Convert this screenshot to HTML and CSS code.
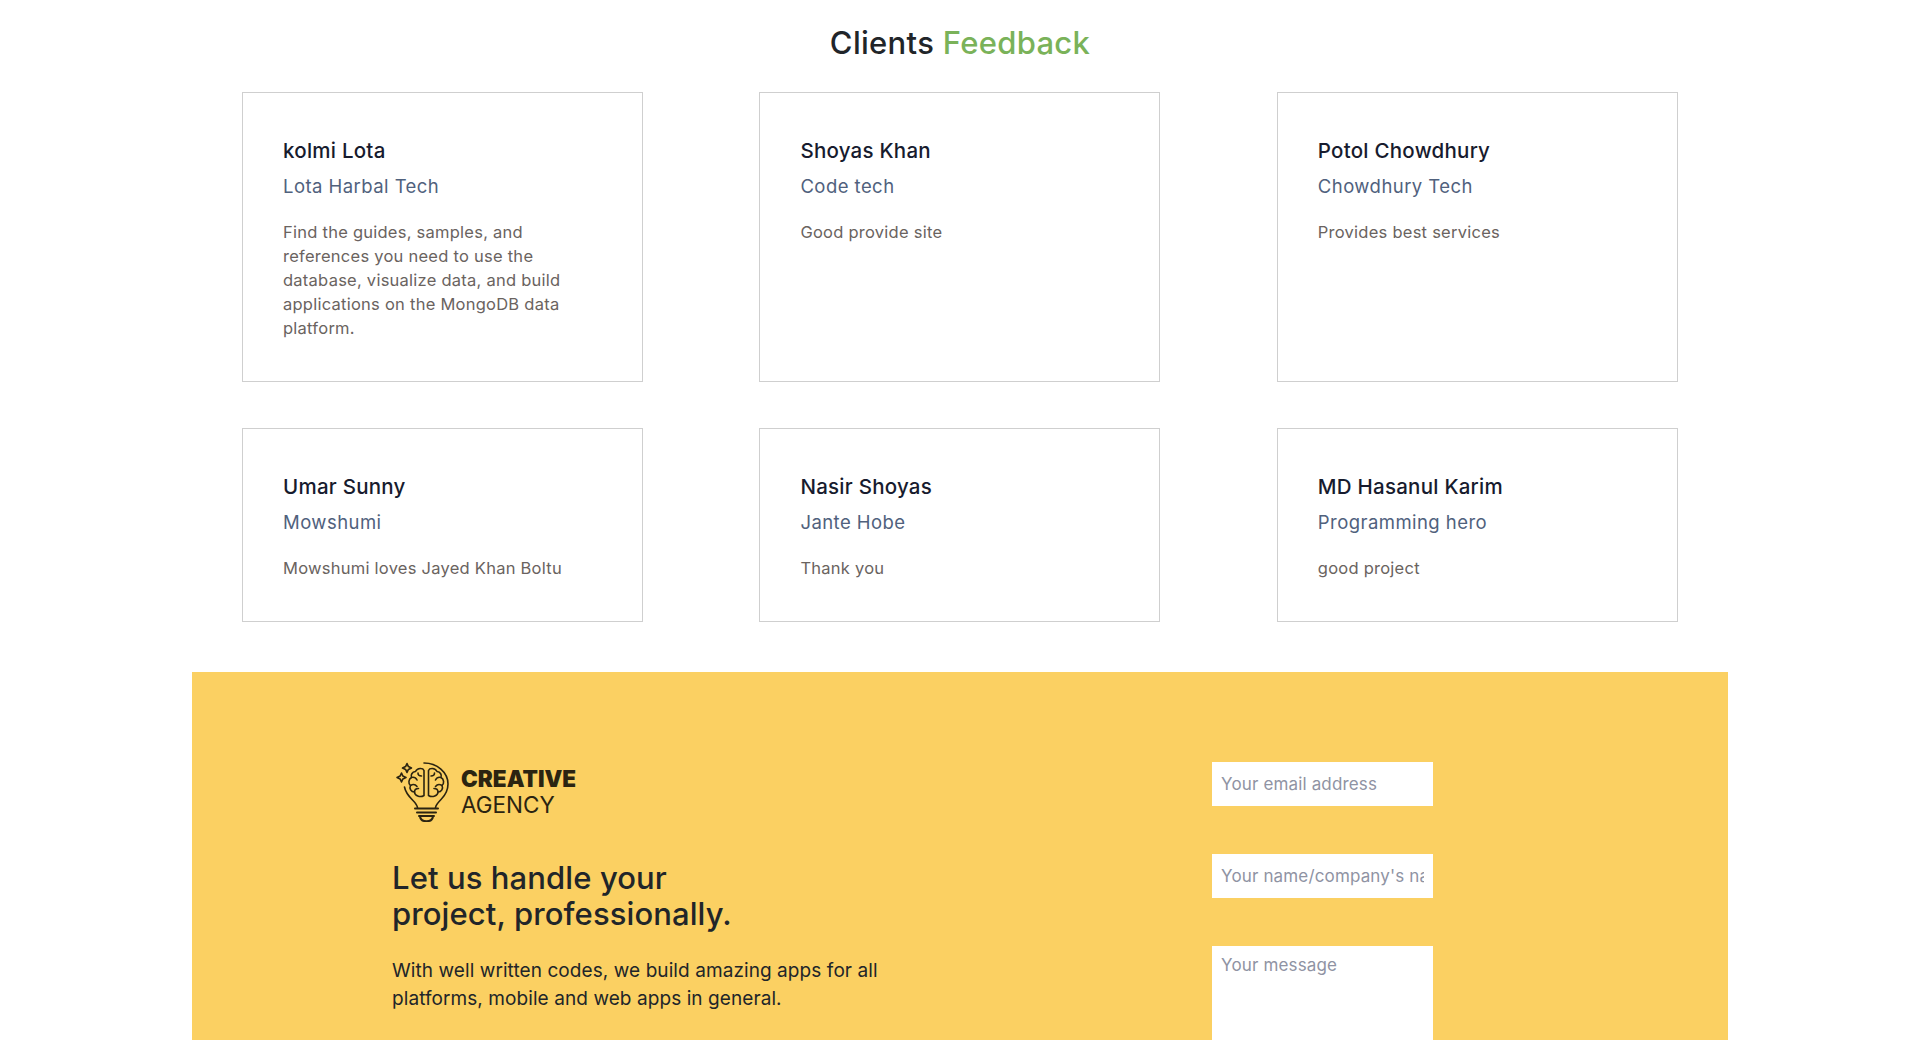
FILE: index.html
```html
<!DOCTYPE html>
<html lang="en">
<head>
<meta charset="utf-8">
<title>Creative Agency</title>
<link rel="stylesheet" href="styles.css">
</head>
<body>
<section class="feedback">
  <h2 class="title">Clients <span class="accent">Feedback</span></h2>
  <div class="cards">
    <article class="card"><h3 class="name">kolmi Lota</h3><h4 class="company">Lota Harbal Tech</h4><p class="text">Find the guides, samples, and references you need to use the database, visualize data, and build applications on the MongoDB data platform.</p></article>
    <article class="card"><h3 class="name">Shoyas Khan</h3><h4 class="company">Code tech</h4><p class="text">Good provide site</p></article>
    <article class="card"><h3 class="name">Potol Chowdhury</h3><h4 class="company">Chowdhury Tech</h4><p class="text">Provides best services</p></article>
    <article class="card"><h3 class="name">Umar Sunny</h3><h4 class="company">Mowshumi</h4><p class="text">Mowshumi loves Jayed Khan Boltu</p></article>
    <article class="card"><h3 class="name">Nasir Shoyas</h3><h4 class="company">Jante Hobe</h4><p class="text">Thank you</p></article>
    <article class="card"><h3 class="name">MD Hasanul Karim</h3><h4 class="company">Programming hero</h4><p class="text">good project</p></article>
  </div>
</section>
<footer class="contact">
  <div class="intro">
    <div class="logo">
      <svg class="bulb" viewBox="0 0 54 60" width="54" height="60" fill="none" stroke="#2b2411" stroke-width="1.600" stroke-linecap="round" stroke-linejoin="round">
        <path d="M28 1c13 0 24 9.500 24 21 0 7-3.500 12-7 15.500-3 3-5 5.500-5.500 8"/>
        <path d="M21.500 45.500c-.5-2.500-2.500-5-5-7.500C12.500 34 9.500 30.500 8.500 25"/>
        <path d="M28 8.500c-1-2.500-6.500-3-8.500 1-3.500.5-5 3.500-4 6-3 1.500-3.500 6-1 8-1.500 3 .5 6.500 4 6.500 0 3.500 5.500 6 9.500 3.500z"/>
        <path d="M32.500 8.500c1-2.500 6.500-3 8.500 1 3.500.5 5 3.500 4 6 3 1.500 3.500 6 1 8 1.500 3-.5 6.500-4 6.500 0 3.500-5.500 6-9.500 3.500z"/>
        <path d="M15.500 15.500c2-.5 4.500.5 5.500 2.500M14.500 23.500c2.500-1.500 5-1 6.500 1M18.500 30c0-2 1.500-3.500 4-3.500M22 11c0 2 1.500 3 3.500 3"/>
        <path d="M45 15.500c-2-.5-4.500.5-5.500 2.500M46 23.500c-2.500-1.500-5-1-6.500 1M42 30c0-2-1.500-3.500-4-3.500M38.500 11c0 2-1.500 3-3.500 3"/>
        <path d="M11 1.500l1.400 3.100 3.100 1.400-3.100 1.400-1.400 3.100-1.400-3.100-3.100-1.400 3.100-1.400z"/>
        <path d="M5.500 11l1.400 3.100 3.100 1.400-3.100 1.400-1.400 3.100-1.400-3.100-3.100-1.400 3.100-1.400z"/>
        <path d="M19 46.500h23M21 50.500h19M23 54h15" stroke-width="2"/>
        <path d="M24 54.500c.5 3 3 4.800 6.500 4.800s6-1.800 6.500-4.800" stroke-width="2"/>
      </svg>
      <div class="wordmark"><strong class="brand">CREATIVE</strong><span class="agency">AGENCY</span></div>
    </div>
    <h2 class="headline">Let us handle your<br>project, professionally.</h2>
    <p class="lead">With well written codes, we build amazing apps for all<br>platforms, mobile and web apps in general.</p>
  </div>
  <form class="form">
    <input class="field" type="text" placeholder="Your email address">
    <input class="field" type="text" placeholder="Your name/company's name">
    <textarea class="field message" placeholder="Your message"></textarea>
  </form>
</footer>
</body>
</html>
```
FILE: styles.css
```css
* { box-sizing: border-box; }
html, body { margin: 0; height: 1040px; overflow: hidden; background: #fff; }
body { font-family: "Inter", "Liberation Sans", sans-serif; color: #2d2d2d; }
.feedback { padding: 20px 242px 0; height: 672px; }
.title { margin: 0; height: 72px; text-align: center; font-size: 31px; line-height: 46px; font-weight: 500; color: #212529; letter-spacing: 0.3px; }
.accent { color: #7ab259; }
.cards { display: grid; grid-template-columns: repeat(3, 401px); grid-template-rows: 290px 194px; column-gap: 116.400px; row-gap: 46px; }
.card { border: 1px solid #cfcfcf; padding: 43px 40px 0; }
.name { margin: 0; font-size: 20.500px; line-height: 30px; font-weight: 500; color: #171b2e; letter-spacing: 0.25px; }
.company { margin: 6px 0 0; font-size: 18.500px; line-height: 29px; font-weight: 400; color: #50617d; letter-spacing: 0.45px; }
.text { margin: 19px 0 0; max-width: 300px; font-size: 16.500px; line-height: 24px; font-weight: 400; color: #6a6360; letter-spacing: 0.25px; }
.contact { display: flex; margin: 0 192px; height: 368px; background: #fbd062; padding: 90px 0 0 200px; }
.intro { width: 820px; flex: none; }
.logo { display: flex; align-items: center; gap: 11px; height: 60px; margin-left: 4px; }
.bulb { flex: none; }
.wordmark { display: flex; flex-direction: column; color: #2b2411; }
.brand { font-size: 22.500px; line-height: 26px; font-weight: 900; }
.agency { font-size: 22.500px; line-height: 26px; font-weight: 400; }
.headline { margin: 38px 0 0; font-size: 31px; line-height: 36px; font-weight: 500; color: #212529; letter-spacing: 0.1px; }
.lead { margin: 25px 0 0; font-size: 19px; line-height: 28px; font-weight: 400; color: #212529; letter-spacing: 0.08px; }
.form { display: flex; flex-direction: column; gap: 48px; align-items: flex-start; }
.field { flex: none; width: 221px; height: 44px; border: 0; border-radius: 0; background: #fff; padding: 0 9px; font-family: inherit; font-size: 17px; letter-spacing: 0.15px; color: #212529; display: block; }
.field::placeholder { color: #8f93a3; opacity: 1; }
.message { height: 94px; padding-top: 9px; resize: none; }
```
